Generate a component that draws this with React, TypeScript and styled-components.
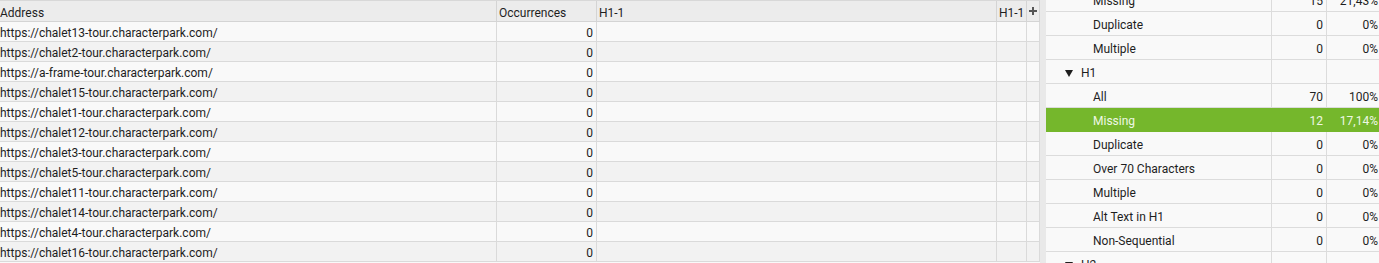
import React from "react";
import styled, { createGlobalStyle } from "styled-components";

const Global = createGlobalStyle`
  html, body { margin: 0; padding: 0; background: #f9f9f9; }
  body { font-family: Roboto, "Liberation Sans", sans-serif; font-size: 12px; color: #1e1e1e; overflow: hidden; }
`;

const Page = styled.div`
  display: flex;
  width: 1379px;
  height: 263px;
  overflow: hidden;
`;

const LeftPanel = styled.div`
  width: 1040px;
  flex: none;
  display: flex;
  flex-direction: column;
  background: #f9f9f9;
`;

const COLS = "497px 100px 400px 30px 13px";

const HeaderRow = styled.div`
  display: grid;
  grid-template-columns: ${COLS};
  height: 20px;
  border-top: 1px solid #d8d8d8;
  border-bottom: 1px solid #d4d4d4;
  background: #ececec;
`;

const HeaderCell = styled.div<{ $last?: boolean }>`
  display: flex;
  align-items: center;
  box-sizing: border-box;
  padding-top: ${(p) => (p.$last ? "0" : "3px")};
  padding-left: ${(p) => (p.$last ? "0" : "2px")};
  justify-content: ${(p) => (p.$last ? "center" : "flex-start")};
  border-right: 1px solid #d4d4d4;
  white-space: nowrap;
  overflow: hidden;
  line-height: 16px;
  color: #1e1e1e;
  &:first-child { padding-left: 0; }
`;

const Row = styled.div<{ $alt: boolean }>`
  display: grid;
  grid-template-columns: ${COLS};
  height: 19px;
  border-bottom: 1px solid #dadada;
  background: ${(p) => (p.$alt ? "#f2f2f2" : "#f9f9f9")};
`;

const Cell = styled.div<{ $num?: boolean }>`
  box-sizing: border-box;
  padding-top: 2px;
  text-align: ${(p) => (p.$num ? "right" : "left")};
  padding-right: ${(p) => (p.$num ? "3px" : "0")};
  border-right: 1px solid #dadada;
  white-space: nowrap;
  overflow: hidden;
  line-height: 19px;
  height: 19px;
`;

const Splitter = styled.div`
  width: 6px;
  flex: none;
  background: #e9e9e9;
`;

const RightPanel = styled.div`
  flex: 1;
  overflow: hidden;
  background: #f9f9f9;
`;

const RightInner = styled.div`
  margin-top: -12px;
`;

const SumRow = styled.div<{ $sel?: boolean }>`
  display: grid;
  grid-template-columns: 226px 55px 52px;
  height: 23px;
  border-bottom: 1px solid ${(p) => (p.$sel ? "#75b72c" : "#dcdcdc")};
  background: ${(p) => (p.$sel ? "#75b72c" : "transparent")};
  color: ${(p) => (p.$sel ? "#eef7e4" : "#1e1e1e")};
`;

const SumCell = styled.div<{ $num?: boolean; $sel?: boolean; $pad?: number; $last?: boolean }>`
  display: flex;
  align-items: center;
  box-sizing: border-box;
  padding-top: 3px;
  justify-content: ${(p) => (p.$num ? "flex-end" : "flex-start")};
  padding-left: ${(p) => p.$pad ?? 0}px;
  padding-right: ${(p) => (p.$num ? (p.$last ? "1px" : "3px") : "0")};
  border-right: ${(p) => (p.$last ? "none" : `1px solid ${p.$sel ? "#75b72c" : "#dcdcdc"}`)};
  white-space: nowrap;
  line-height: 18px;
`;

const Caret = styled.svg`
  width: 8px;
  height: 7px;
  margin-right: 8px;
  flex: none;
`;

const PlusIcon = () => (
  <svg width="8" height="8" viewBox="0 0 8 8">
    <rect x="3" y="0" width="2" height="8" fill="#555" />
    <rect x="0" y="3" width="8" height="2" fill="#555" />
  </svg>
);

const urls = [
  "chalet13",
  "chalet2",
  "a-frame",
  "chalet15",
  "chalet1",
  "chalet12",
  "chalet3",
  "chalet5",
  "chalet11",
  "chalet14",
  "chalet4",
  "chalet16",
];

type Sum = { label: string; count?: string; pct?: string; group?: boolean; sel?: boolean };

const summary: Sum[] = [
  { label: "Missing", count: "15", pct: "21,43%" },
  { label: "Duplicate", count: "0", pct: "0%" },
  { label: "Multiple", count: "0", pct: "0%" },
  { label: "H1", group: true },
  { label: "All", count: "70", pct: "100%" },
  { label: "Missing", count: "12", pct: "17,14%", sel: true },
  { label: "Duplicate", count: "0", pct: "0%" },
  { label: "Over 70 Characters", count: "0", pct: "0%" },
  { label: "Multiple", count: "0", pct: "0%" },
  { label: "Alt Text in H1", count: "0", pct: "0%" },
  { label: "Non-Sequential", count: "0", pct: "0%" },
  { label: "H2", group: true },
];

export default function App() {
  return (
    <Page>
      <Global />
      <LeftPanel>
        <HeaderRow>
          <HeaderCell>Address</HeaderCell>
          <HeaderCell>Occurrences</HeaderCell>
          <HeaderCell>H1-1</HeaderCell>
          <HeaderCell>H1-1</HeaderCell>
          <HeaderCell $last>
            <PlusIcon />
          </HeaderCell>
        </HeaderRow>
        {urls.map((u, i) => (
          <Row key={u} $alt={i % 2 === 1}>
            <Cell>{`https://${u}-tour.characterpark.com/`}</Cell>
            <Cell $num>0</Cell>
            <Cell />
            <Cell />
            <Cell />
          </Row>
        ))}
      </LeftPanel>
      <Splitter />
      <RightPanel>
        <RightInner>
          {summary.map((s, i) => (
            <SumRow key={i} $sel={s.sel}>
              <SumCell $pad={s.group ? 19 : 47} $sel={s.sel}>
                {s.group && (
                  <Caret viewBox="0 0 8 7">
                    <polygon points="0,0 8,0 4,7" fill="#1e1e1e" />
                  </Caret>
                )}
                {s.label}
              </SumCell>
              <SumCell $num $sel={s.sel}>{s.count}</SumCell>
              <SumCell $num $last $sel={s.sel}>{s.pct}</SumCell>
            </SumRow>
          ))}
        </RightInner>
      </RightPanel>
    </Page>
  );
}
